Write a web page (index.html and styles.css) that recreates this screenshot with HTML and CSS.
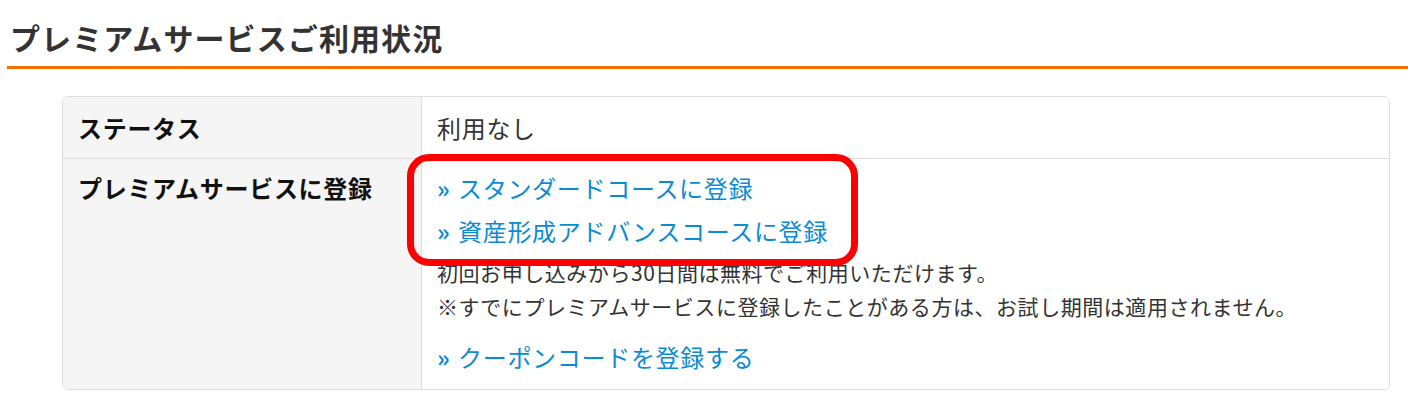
FILE: index.html
```html
<!DOCTYPE html>
<html lang="ja">
<head>
<meta charset="utf-8">
<title>プレミアムサービスご利用状況</title>
<link rel="stylesheet" href="styles.css">
</head>
<body>
<div class="page">
  <h2 class="title">プレミアムサービスご利用状況</h2>
  <div class="usage">
    <div class="row">
      <div class="label">ステータス</div>
      <div class="value">利用なし</div>
    </div>
    <div class="row row-sep">
      <div class="label">プレミアムサービスに登録</div>
      <div class="value">
        <a class="link" href="#"><span class="raquo">»</span>スタンダードコースに登録</a>
        <a class="link" href="#"><span class="raquo">»</span>資産形成アドバンスコースに登録</a>
        <p class="note">初回お申し込みから30日間は無料でご利用いただけます。</p>
        <p class="note">※すでにプレミアムサービスに登録したことがある方は、お試し期間は適用されません。</p>
        <a class="link coupon" href="#"><span class="raquo">»</span>クーポンコードを登録する</a>
      </div>
    </div>
    <div class="highlight"></div>
  </div>
</div>
</body>
</html>
```

FILE: styles.css
```css
html, body {
  margin: 0;
  padding: 0;
  background: #ffffff;
}

body {
  font-family: "Noto Sans CJK JP", "Noto Sans", sans-serif;
  color: #333333;
}

.page {
  padding-left: 7px;
}

.title {
  margin: 0;
  padding: 16px 3px 8px;
  font-size: 30px;
  line-height: 42px;
  font-weight: 700;
  letter-spacing: 1.1px;
  color: #333333;
  border-bottom: 3px solid #f26f00;
}

.usage {
  position: relative;
  margin: 27px 18px 0 55px;
  border: 1px solid #dddddd;
  border-radius: 6px;
  overflow: hidden;
}

.row {
  display: grid;
  grid-template-columns: 359px 1fr;
}

.row-sep {
  border-top: 1px solid #dddddd;
}

.label {
  background: #f5f5f5;
  border-right: 1px solid #dddddd;
  padding: 9px 15px;
  font-size: 24px;
  line-height: 43px;
  font-weight: 700;
  letter-spacing: 0.7px;
  color: #111111;
}

.value {
  padding: 9px 15px;
  font-size: 24px;
  line-height: 43px;
  letter-spacing: 0.7px;
  color: #333333;
  background: #ffffff;
}

.row-sep .label {
  padding-top: 7px;
}

.row-sep .value {
  padding-top: 7px;
  padding-bottom: 11px;
  display: flex;
  flex-direction: column;
  align-items: flex-start;
}

.link {
  color: #0b8bd3;
  text-decoration: none;
  line-height: 43px;
}

.raquo {
  display: inline-block;
  width: 21px;
  letter-spacing: 0;
  font-weight: 700;
}

.note {
  margin: 0;
  font-size: 21px;
  line-height: 34px;
  letter-spacing: 0.55px;
  color: #333333;
}

.row-sep .note:first-of-type {
  margin-top: 3px;
}

.coupon {
  margin-top: 12px;
}

.highlight {
  position: absolute;
  left: 344px;
  top: 57px;
  width: 451px;
  height: 112px;
  box-sizing: border-box;
  border: 7px solid #ff0000;
  border-radius: 22px;
  pointer-events: none;
}
```
